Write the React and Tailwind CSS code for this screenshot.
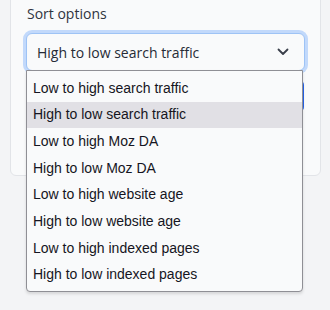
import React from "react";

const options = [
  "Low to high search traffic",
  "High to low search traffic",
  "Low to high Moz DA",
  "High to low Moz DA",
  "Low to high website age",
  "High to low website age",
  "Low to high indexed pages",
  "High to low indexed pages",
];

export default function App() {
  return (
    <div className="w-[330px] h-[310px] overflow-hidden bg-[#f3f4f6] pl-[10px]">
      <div className="-mt-[20px] w-[311px] rounded-[6px] border border-[#e2e4e8] bg-[#f9fafb] px-[15px] pt-[23px] pb-[63px]">
        <div
          className="text-[14px] leading-[20px] text-[#2f3440] pl-[1px]"
          style={{ fontFamily: '"Open Sans", "Noto Sans", sans-serif' }}
        >
          Sort options
        </div>
        <div className="relative mt-[9px] w-[279px]">
          <div
            className="flex h-[38px] items-center justify-between rounded-[6px] border border-[#9ec3f5] bg-[#f9fafb] pl-[10px] pr-[15px] ring-[3px] ring-[#c2d9fb]"
            style={{ fontFamily: '"Open Sans", "Noto Sans", sans-serif' }}
          >
            <span className="text-[14px] text-[#262b36]">High to low search traffic</span>
            <svg width="12" height="8" viewBox="0 0 12 8" fill="none">
              <path d="M1.5 1.5 L6 6 L10.5 1.5" stroke="#3a3f4a" strokeWidth="1.8" strokeLinecap="round" strokeLinejoin="round" />
            </svg>
          </div>
          <div className="mt-[9px] h-[32px] w-[278px] rounded-[5px] bg-[#2563eb]" />
          <div
            className="absolute left-0 top-[37px] z-10 w-[277px] rounded-b-[4px] border border-[#8f8f95] bg-[#f9fafb] pt-[4px] pb-[3px] shadow-[0_2px_3px_rgba(0,0,0,0.12)]"
            style={{ fontFamily: '"Liberation Sans", Arial, sans-serif' }}
          >
            {options.map((o, i) => (
              <div
                key={o}
                className={
                  "flex h-[26.67px] items-center pl-[6px] text-[14px] text-[#151522] " +
                  (i === 1 ? "bg-[#e1e0e5]" : "")
                }
              >
                {o}
              </div>
            ))}
          </div>
        </div>
      </div>
    </div>
  );
}
